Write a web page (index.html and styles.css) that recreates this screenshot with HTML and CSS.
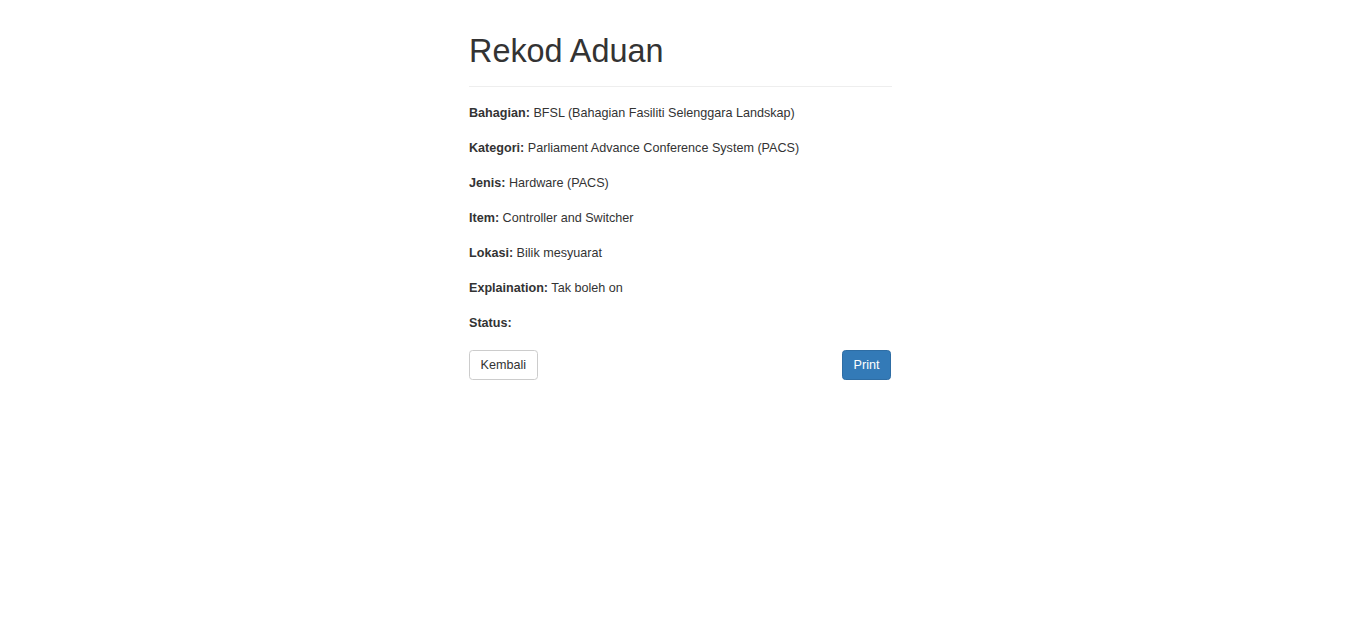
FILE: index.html
```html
<!DOCTYPE html>
<html lang="ms">
<head>
<meta charset="utf-8">
<title>Rekod Aduan</title>
<link rel="stylesheet" href="styles.css">
</head>
<body>
<div class="wrapper">
  <div class="page-header">
    <h1>Rekod Aduan</h1>
  </div>
  <div class="details">
    <div class="row"><strong>Bahagian:</strong> BFSL (Bahagian Fasiliti Selenggara Landskap)</div>
    <div class="row"><strong>Kategori:</strong> Parliament Advance Conference System (PACS)</div>
    <div class="row"><strong>Jenis:</strong> Hardware (PACS)</div>
    <div class="row"><strong>Item:</strong> Controller and Switcher</div>
    <div class="row"><strong>Lokasi:</strong> Bilik mesyuarat</div>
    <div class="row"><strong>Explaination:</strong> Tak boleh on</div>
    <div class="row"><strong>Status:</strong> </div>
  </div>
  <div class="actions">
    <button class="btn btn-default" type="button">Kembali</button>
    <button class="btn btn-primary" type="button">Print</button>
  </div>
</div>
</body>
</html>
```
FILE: styles.css
```css
html, body {
  margin: 0;
  padding: 0;
  background: #fff;
}
body {
  font-family: "Liberation Sans", Arial, Helvetica, sans-serif;
  font-size: 12.6px;
  line-height: 18px;
  color: #333;
}
.wrapper {
  width: 423px;
  margin-left: calc(50% - 212.5px);
  padding-top: 33px;
}
.page-header {
  padding-bottom: 17px;
  border-bottom: 1px solid #eee;
  margin-bottom: 17px;
}
.page-header h1 {
  margin: 0;
  font-size: 32.4px;
  line-height: 36px;
  font-weight: normal;
  color: #333;
}
.details {
  display: flex;
  flex-direction: column;
  gap: 17px;
}
.row strong {
  font-weight: bold;
}
.actions {
  margin-top: 18px;
  display: flex;
  justify-content: space-between;
  padding-right: 1px;
}
.btn {
  font-family: "Liberation Sans", Arial, Helvetica, sans-serif;
  font-size: 12.6px;
  line-height: 18px;
  padding: 5px 10.5px;
  border: 1px solid transparent;
  border-radius: 3.6px;
  cursor: pointer;
  margin: 0;
}
.btn-default {
  background: #fff;
  border-color: #ccc;
  color: #333;
}
.btn-primary {
  background: #337ab7;
  border-color: #2e6da4;
  color: #fff;
}
```
